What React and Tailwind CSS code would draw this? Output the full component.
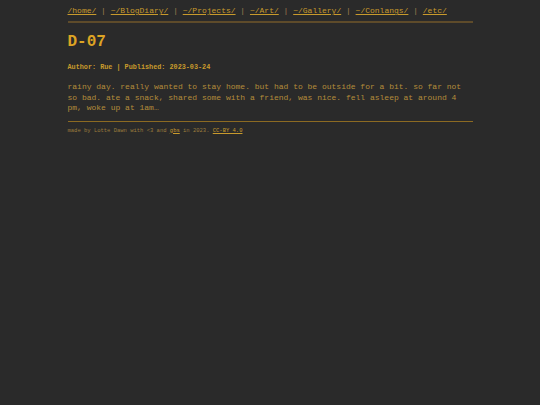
const navItems = ['/home/', '~/BlogDiary/', '~/Projects/', '~/Art/', '~/Gallery/', '~/Conlangs/', '/etc/']

export default function App() {
  return (
    <div className="min-h-[405px] bg-[#2a2a2a] text-[#b8903c] font-['Liberation_Mono',monospace]">
      <div className="w-[405px] mx-auto">
        <nav className="pt-[6px] pb-[5px] text-[8px] leading-[10px] border-b-2 border-[#5e4b2a]">
          {navItems.map((item, i) => (
            <span key={item}>
              {i > 0 && <span className="text-[#a08050]"> | </span>}
              <a href="#" className="underline text-[#c89a2c]">{item}</a>
            </span>
          ))}
        </nav>
        <h1 className="mt-[10px] text-[16px] leading-[18px] font-bold text-[#dca424]">D-07</h1>
        <p className="mt-[12px] text-[6.8px] leading-[8px] font-bold text-[#c89a2c]">Author: Rue | Published: 2023-03-24</p>
        <p className="mt-[11px] text-[8px] leading-[10.5px] text-[#b48c3a]">
          rainy day. really wanted to stay home. but had to be outside for a bit. so far not so bad. ate a snack, shared some with a friend, was nice. fell asleep at around 4 pm, woke up at 1am…
        </p>
        <div className="mt-[7px] border-t border-[#8c6a22]" />
        <p className="mt-[5px] text-[5.5px] leading-[7px] text-[#9c7c3c]">
          made by Lotte Dawn with &lt;3 and <a href="#" className="underline text-[#c89a2c]">gbs</a> in 2023. <a href="#" className="underline text-[#c89a2c]">CC-BY 4.0</a>
        </p>
      </div>
    </div>
  )
}
